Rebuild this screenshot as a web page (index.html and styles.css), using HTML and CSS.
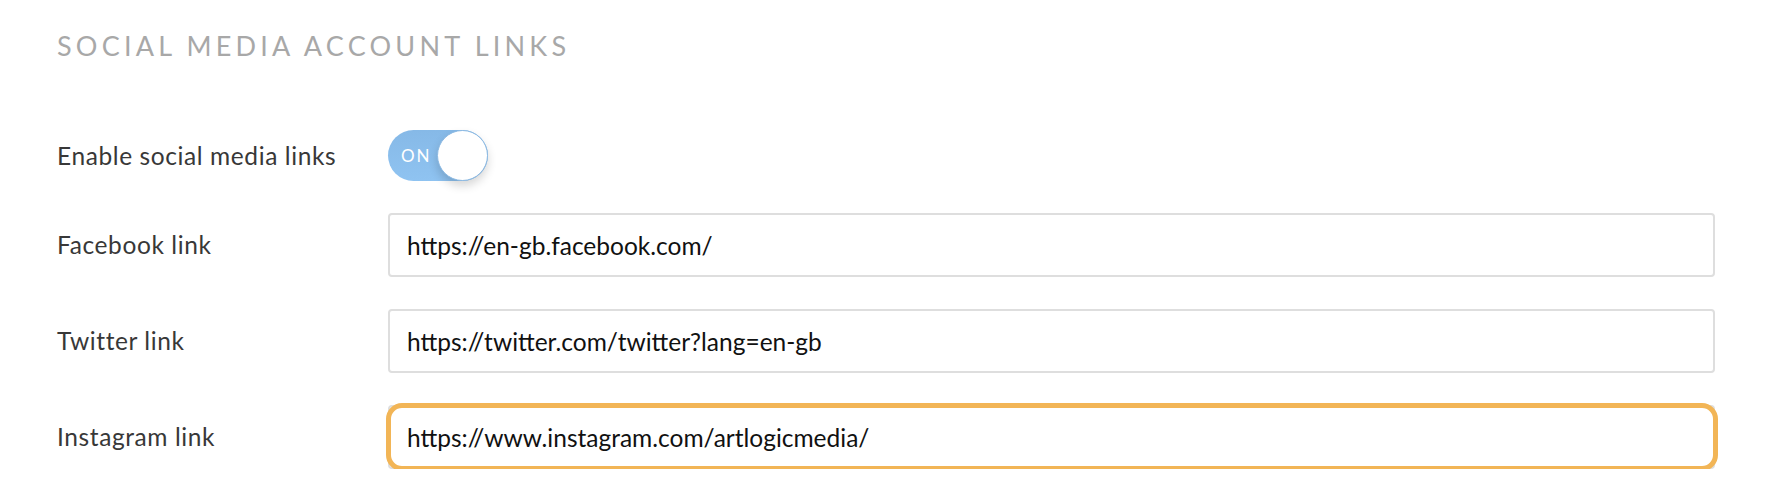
FILE: index.html
```html
<!DOCTYPE html>
<html lang="en">
<head>
<meta charset="utf-8">
<title>Social media account links</title>
<link rel="stylesheet" href="styles.css">
</head>
<body>
<section class="panel">
  <h2 class="section-title">SOCIAL MEDIA ACCOUNT LINKS</h2>
  <div class="form-grid">
    <label class="field-label">Enable social media links</label>
    <div class="toggle-cell">
      <div class="toggle is-on">
        <span class="toggle-text">ON</span>
        <span class="toggle-knob"></span>
      </div>
    </div>

    <label class="field-label" for="fb">Facebook link</label>
    <div class="field">
      <input id="fb" class="text-input" type="text" value="https://en-gb.facebook.com/">
    </div>

    <label class="field-label" for="tw">Twitter link</label>
    <div class="field">
      <input id="tw" class="text-input" type="text" value="https://twitter.com/twitter?lang=en-gb">
    </div>

    <label class="field-label" for="ig">Instagram link</label>
    <div class="field is-focused">
      <input id="ig" class="text-input" type="text" value="https://www.instagram.com/artlogicmedia/">
    </div>
  </div>
</section>
</body>
</html>
```

FILE: styles.css
```css
html, body {
  margin: 0;
  padding: 0;
  background: #ffffff;
}

body {
  font-family: "Lato", "Open Sans", sans-serif;
  color: #333333;
}

.panel {
  padding: 33px 51px 0 57px;
}

.section-title {
  margin: 0;
  font-size: 27px;
  line-height: 26px;
  font-weight: 400;
  letter-spacing: 4.2px;
  color: #a8a8a8;
}

.form-grid {
  margin-top: 71px;
  display: grid;
  grid-template-columns: 331px 1fr;
  row-gap: 32px;
  align-items: center;
}

.field-label {
  font-size: 24.5px;
  line-height: 30px;
  letter-spacing: 0.6px;
  color: #383838;
}

.toggle-cell {
  display: flex;
  align-items: center;
}

.toggle {
  position: relative;
  width: 100px;
  height: 51px;
  border-radius: 26px;
  background: linear-gradient(180deg, #86b9e7 0%, #8fc3f1 100%);
  box-sizing: border-box;
  display: flex;
  align-items: center;
}

.toggle-text {
  margin-left: 13px;
  font-size: 17px;
  letter-spacing: 2px;
  color: #ffffff;
  font-family: "Lato", sans-serif;
}

.toggle-knob {
  position: absolute;
  right: 0;
  top: 0;
  width: 51px;
  height: 51px;
  box-sizing: border-box;
  border-radius: 50%;
  background: #ffffff;
  border: 1.5px solid #8bb9e3;
  box-shadow: 0 5px 10px rgba(0, 0, 0, 0.16);
}

.field {
  position: relative;
}

.text-input {
  display: block;
  width: 100%;
  height: 64px;
  box-sizing: border-box;
  margin: 0;
  padding: 0 17px;
  border: 2px solid #dedede;
  border-radius: 4px;
  background: #ffffff;
  font-family: "Lato", "Open Sans", sans-serif;
  font-size: 24.5px;
  color: #111111;
  outline: none;
}

.field.is-focused::after {
  content: "";
  position: absolute;
  top: -2px;
  left: -2px;
  right: -3px;
  bottom: -2px;
  border: 5px solid #f2b556;
  border-radius: 16px;
  pointer-events: none;
}
```
